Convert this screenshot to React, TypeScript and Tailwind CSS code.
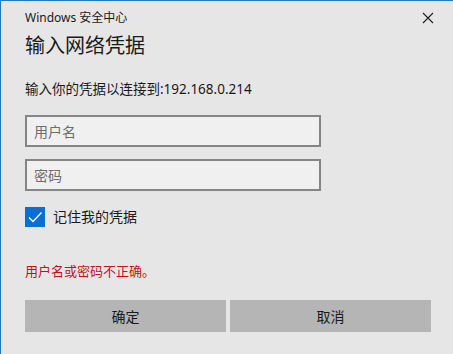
// Windows 安全中心 — 输入网络凭据 对话框

const FONT = "font-['Segoe_UI','Noto_Sans','Noto_Sans_CJK_SC',sans-serif]";

function CloseIcon() {
  return (
    <svg width="12" height="12" viewBox="0 0 12 12" className="text-[#1f1f1f]">
      <path d="M1 1 L11 11 M11 1 L1 11" stroke="currentColor" strokeWidth="1.1" />
    </svg>
  );
}

function CheckIcon() {
  return (
    <svg width="20" height="20" viewBox="0 0 20 20">
      <path d="M4 10.5 L8 14.5 L16.5 5.5" fill="none" stroke="#ffffff" strokeWidth="1.3" />
    </svg>
  );
}

export default function App() {
  return (
    <div
      className={`${FONT} h-[354px] w-[453px] overflow-hidden border-t border-l border-[#1c78c9] bg-[#e6e6e6] text-[#000000]`}
    >
      <div className="flex flex-col pl-[24px] pr-[14px]">
        <div className="flex h-[33px] items-center justify-between pt-[1px]">
          <span className="text-[12px] text-[#1a1a1a]">Windows 安全中心</span>
          <span className="mr-[1px] flex h-[20px] w-[20px] items-center justify-center">
            <CloseIcon />
          </span>
        </div>
        <h1 className="mt-[-2px] text-[20px] leading-[28px] text-[#1a1a1a]">输入网络凭据</h1>
        <p className="mt-[20px] text-[13.5px] leading-[18px] text-[#1a1a1a]">
          输入你的凭据以连接到:192.168.0.214
        </p>
      </div>

      <div className="flex flex-col pl-[24px]">
        <input
          placeholder="用户名"
          className="mt-[17px] h-[32px] w-[296px] border-2 border-[#858585] bg-[#f0f0f0] px-[7px] text-[14px] placeholder:text-[#6d6d6d] outline-none"
        />
        <input
          placeholder="密码"
          type="password"
          className="mt-[12px] h-[32px] w-[296px] border-2 border-[#858585] bg-[#f0f0f0] px-[7px] text-[14px] placeholder:text-[#6d6d6d] outline-none"
        />
        <label className="mt-[15px] flex items-center gap-[8px]">
          <span className="flex h-[20px] w-[20px] items-center justify-center bg-[#0a6fd1]">
            <CheckIcon />
          </span>
          <span className="text-[14px] text-[#1a1a1a]">记住我的凭据</span>
        </label>
        <p className="mt-[35px] text-[13px] leading-[18px] text-[#c1121b]">用户名或密码不正确。</p>
      </div>

      <div className="mt-[20px] flex gap-[4px] pl-[24px]">
        <button className="h-[32px] w-[201px] bg-[#b5b5b5] text-[14px] text-[#1a1a1a]">确定</button>
        <button className="h-[32px] w-[201px] bg-[#b5b5b5] text-[14px] text-[#1a1a1a]">取消</button>
      </div>
    </div>
  );
}
